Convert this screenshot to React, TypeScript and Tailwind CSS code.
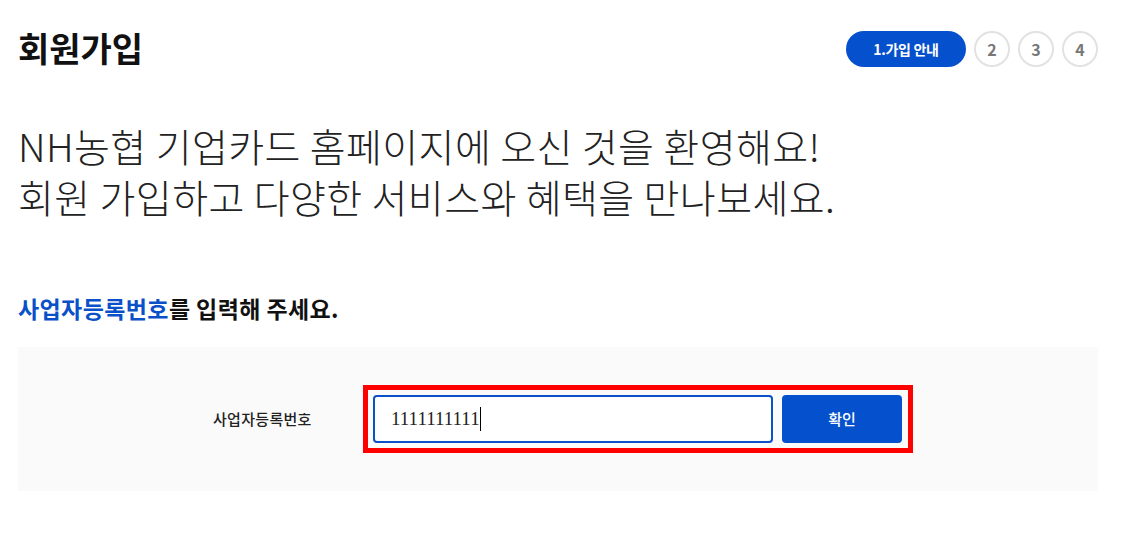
export default function App() {
  const font = { fontFamily: '"Noto Sans CJK KR", "Noto Sans", sans-serif' };
  return (
    <div className="w-[1129px] h-[533px] bg-white text-[#111]" style={font}>
      <div className="px-[18px]">
        <div className="h-[96px] flex items-center justify-between pr-[13px]">
          <h1 className="text-[34px] font-bold leading-[48px] text-[#111]">회원가입</h1>
          <div className="flex items-center gap-[8px] pt-[2px]">
            <div className="w-[120px] h-[36px] rounded-full bg-[#0550cc] text-white text-[14px] font-bold flex items-center justify-center tracking-[-0.3px]">
              1.가입 안내
            </div>
            {["2", "3", "4"].map((n) => (
              <div
                key={n}
                className="w-[36px] h-[36px] rounded-full border-2 border-[#e2e2e2] bg-white text-[#777] text-[16px] font-bold flex items-center justify-center"
              >
                {n}
              </div>
            ))}
          </div>
        </div>
        <div className="mt-[24px] text-[39px] font-light leading-[51px] text-[#222] tracking-[0.4px]">
          <p>NH농협 기업카드 홈페이지에 오신 것을 환영해요!</p>
          <p>회원 가입하고 다양한 서비스와 혜택을 만나보세요.</p>
        </div>
        <p className="mt-[70px] text-[23px] font-bold leading-[32px] text-[#111] tracking-[0.4px]">
          <span className="text-[#0a50c8]">사업자등록번호</span>를 입력해 주세요.
        </p>
        <div className="mt-[23px] w-[1080px] h-[144px] bg-[#fafafa] flex items-center pl-[195px]">
          <div className="w-[150px] text-[15px] font-medium text-[#222] tracking-[0.3px]">사업자등록번호</div>
          <div className="border-[5px] border-[#ff0000] p-[5px] pr-[6px] flex items-center gap-[9px]">
            <div className="w-[400px] h-[48px] border-2 border-[#0a50c8] rounded-[4px] bg-white flex items-center pl-[16px]">
              <span className="text-[19px] text-[#222]" style={{ fontFamily: '"Liberation Serif", serif' }}>
                1111111111
              </span>
              <span className="inline-block w-[1px] h-[24px] bg-black" />
            </div>
            <button className="w-[120px] h-[48px] rounded-[4px] bg-[#0550cc] text-white text-[15px] font-medium">
              확인
            </button>
          </div>
        </div>
      </div>
    </div>
  );
}
